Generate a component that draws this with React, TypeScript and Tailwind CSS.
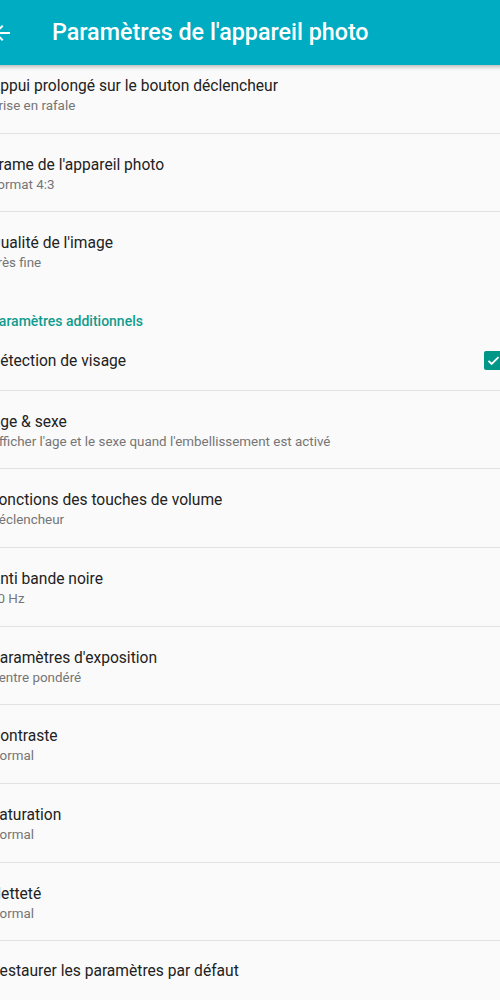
import React from "react";

type Pref = {
  title: string;
  summary?: string;
  checked?: boolean;
  divider?: boolean;
};

const firstGroup: Pref[] = [
  { title: "Appui prolongé sur le bouton déclencheur", summary: "Prise en rafale", divider: true },
  { title: "Frame de l'appareil photo", summary: "Format 4:3", divider: true },
  { title: "Qualité de l'image", summary: "Très fine" },
];

const secondGroup: Pref[] = [
  { title: "Détection de visage", checked: true, divider: true },
  { title: "Age & sexe", summary: "Afficher l'age et le sexe quand l'embellissement est activé", divider: true },
  { title: "Fonctions des touches de volume", summary: "Déclencheur", divider: true },
  { title: "Anti bande noire", summary: "50 Hz", divider: true },
  { title: "Paramètres d'exposition", summary: "Centre pondéré", divider: true },
  { title: "Contraste", summary: "Normal", divider: true },
  { title: "Saturation", summary: "Normal", divider: true },
  { title: "Netteté", summary: "Normal", divider: true },
  { title: "Restaurer les paramètres par défaut" },
];

const PrefRow = ({ pref }: { pref: Pref }) => {
  const twoLine = !!pref.summary;
  return (
    <div
      className={`flex px-4 ${twoLine ? "h-[78.7px] items-start pt-[21px]" : "h-[58.5px] items-center"} ${
        pref.divider ? "border-b border-[#e2e2e2]" : ""
      }`}
    >
      <div className="flex-1 min-w-0">
        <p className="text-[15.6px] leading-[20px] text-[#222] whitespace-nowrap">{pref.title}</p>
        {pref.summary && (
          <p className="text-[13.4px] leading-[20px] text-[#757575] whitespace-nowrap">{pref.summary}</p>
        )}
      </div>
      {pref.checked && (
        <div className="w-[19px] h-[19px] rounded-[2px] bg-[#009688] flex items-center justify-center">
          <svg width="15" height="15" viewBox="0 0 24 24" fill="none">
            <path d="M4 12.5l5 5L20 6.5" stroke="white" strokeWidth="3" />
          </svg>
        </div>
      )}
    </div>
  );
};

export default function App() {
  return (
    <div className="w-[500px] h-[1000px] overflow-hidden bg-[#fafafa]" style={{ fontFamily: "Roboto, 'Noto Sans', sans-serif" }}>
      <div className="-ml-[26px] w-[545px]">
        <header className="relative z-10 h-[65px] bg-[#00acc1] flex items-center shadow-[0_2px_4px_rgba(0,0,0,0.25)]">
          <div className="w-[78px] pl-[16px]">
            <svg width="24" height="24" viewBox="0 0 24 24" fill="white">
              <path d="M20 11H7.83l5.59-5.59L12 4l-8 8 8 8 1.41-1.41L7.83 13H20v-2z" />
            </svg>
          </div>
          <h1 className="text-[23.3px] font-medium text-white">Paramètres de l'appareil photo</h1>
        </header>

        <div className="-mt-[10px]">
          {firstGroup.map((p) => (
            <PrefRow key={p.title} pref={p} />
          ))}
          <div className="h-[41px] px-4 pt-[20px]">
            <p className="text-[14px] leading-[20px] font-medium text-[#129c8e]">Paramètres additionnels</p>
          </div>
          {secondGroup.map((p) => (
            <PrefRow key={p.title} pref={p} />
          ))}
        </div>
      </div>
    </div>
  );
}
